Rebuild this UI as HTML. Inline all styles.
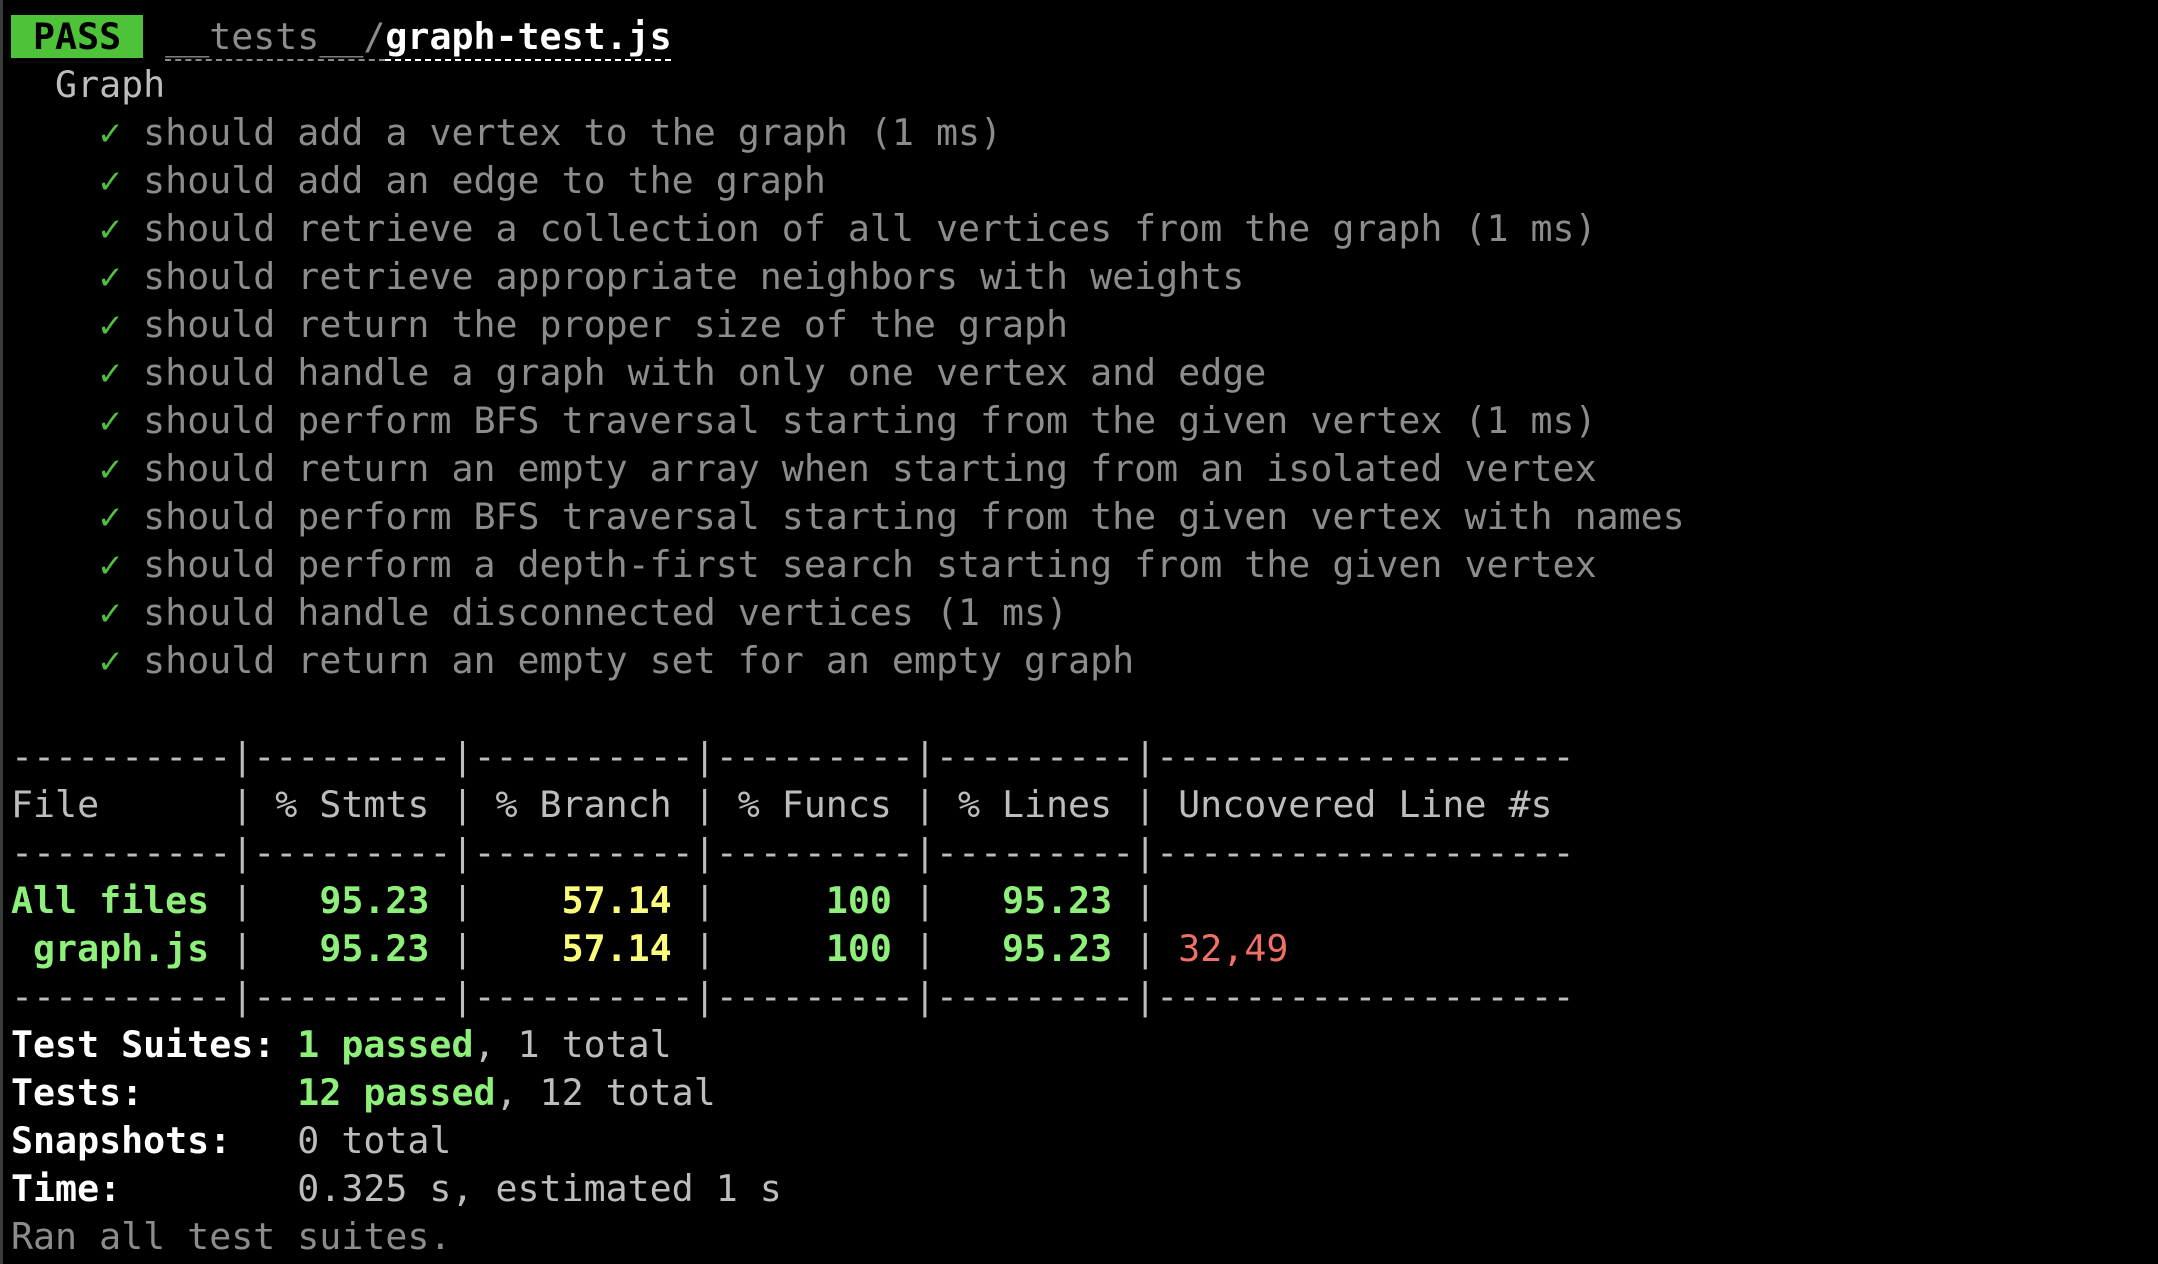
<!DOCTYPE html>
<html><head><meta charset="utf-8"><style>
html,body{margin:0;padding:0;background:#000;width:2158px;height:1264px;overflow:hidden}
body{border-left:3px solid #3a3a3a;box-sizing:border-box}
pre{margin:0;padding:13px 0 0 8px;font-family:"DejaVu Sans Mono","Liberation Mono",monospace;font-size:36.6px;line-height:48px;color:#cfcfcf;white-space:pre}
.d{color:#8c8c8c}
.w{color:#fff;font-weight:bold}
.pass{background:#4ec33a;color:#000;font-weight:bold}
.u{text-decoration:underline dashed;text-underline-offset:10px;text-decoration-thickness:2px}
.ck{color:#4ec33a}
.g{color:#8ef07a;font-weight:bold}
.y{color:#fbfb7a;font-weight:bold}
.r{color:#f07068}
.b{color:#fff;font-weight:bold}
.t{color:#bdbdbd}
</style></head><body><pre><span class="pass"> PASS </span> <span class="d u">__tests__/</span><span class="w u">graph-test.js</span>
<span class="t">  Graph</span>
    <span class="ck">✓</span> <span class="d">should add a vertex to the graph (1 ms)</span>
    <span class="ck">✓</span> <span class="d">should add an edge to the graph</span>
    <span class="ck">✓</span> <span class="d">should retrieve a collection of all vertices from the graph (1 ms)</span>
    <span class="ck">✓</span> <span class="d">should retrieve appropriate neighbors with weights</span>
    <span class="ck">✓</span> <span class="d">should return the proper size of the graph</span>
    <span class="ck">✓</span> <span class="d">should handle a graph with only one vertex and edge</span>
    <span class="ck">✓</span> <span class="d">should perform BFS traversal starting from the given vertex (1 ms)</span>
    <span class="ck">✓</span> <span class="d">should return an empty array when starting from an isolated vertex</span>
    <span class="ck">✓</span> <span class="d">should perform BFS traversal starting from the given vertex with names</span>
    <span class="ck">✓</span> <span class="d">should perform a depth-first search starting from the given vertex</span>
    <span class="ck">✓</span> <span class="d">should handle disconnected vertices (1 ms)</span>
    <span class="ck">✓</span> <span class="d">should return an empty set for an empty graph</span>

<span class="t">----------|---------|----------|---------|---------|-------------------
File      | % Stmts | % Branch | % Funcs | % Lines | Uncovered Line #s 
----------|---------|----------|---------|---------|-------------------</span>
<span class="g">All files</span><span class="t"> | </span><span class="g">  95.23</span><span class="t"> | </span><span class="y">   57.14</span><span class="t"> | </span><span class="g">    100</span><span class="t"> | </span><span class="g">  95.23</span><span class="t"> |</span>
<span class="g"> graph.js</span><span class="t"> | </span><span class="g">  95.23</span><span class="t"> | </span><span class="y">   57.14</span><span class="t"> | </span><span class="g">    100</span><span class="t"> | </span><span class="g">  95.23</span><span class="t"> | </span><span class="r">32,49</span>
<span class="t">----------|---------|----------|---------|---------|-------------------</span>
<span class="b">Test Suites: </span><span class="g">1 passed</span><span class="t">, 1 total</span>
<span class="b">Tests:       </span><span class="g">12 passed</span><span class="t">, 12 total</span>
<span class="b">Snapshots:   </span><span class="t">0 total</span>
<span class="b">Time:        </span><span class="t">0.325 s, estimated 1 s</span>
<span class="d">Ran all test suites.</span></pre></body></html>
